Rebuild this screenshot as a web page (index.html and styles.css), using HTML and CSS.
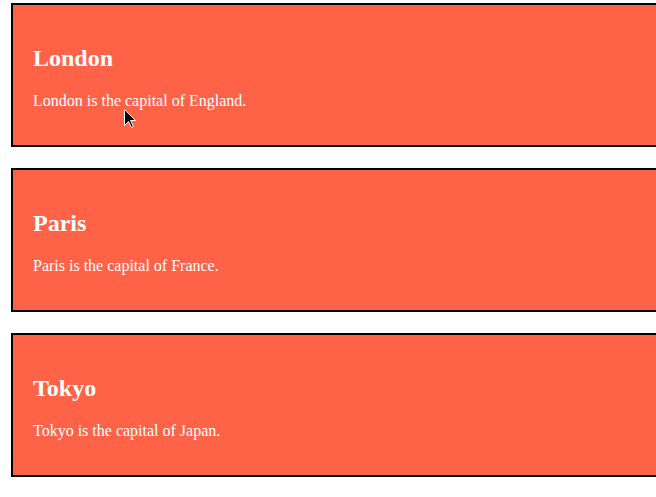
FILE: index.html
```html
<!DOCTYPE html>
<html>
<head>
<meta charset="utf-8">
<link rel="stylesheet" href="styles.css">
</head>
<body>
<div class="page">
  <div class="city">
    <h2>London</h2>
    <p>London is the capital of England.</p>
  </div>
  <div class="city">
    <h2>Paris</h2>
    <p>Paris is the capital of France.</p>
  </div>
  <div class="city">
    <h2>Tokyo</h2>
    <p>Tokyo is the capital of Japan.</p>
  </div>
</div>
<svg class="cursor" width="13" height="20" viewBox="0 0 13 20">
  <path d="M0.5 0.5 L0.5 16.5 L4.5 12.5 L7.5 18.5 L9.5 17.5 L6.5 11.5 L11.5 11.5 Z" fill="#000" stroke="#fff" stroke-width="1"/>
</svg>
</body>
</html>
```
FILE: styles.css
```css
html, body {
  margin: 0;
  padding: 0;
  background: #fff;
  overflow: hidden;
}
body {
  font-family: "Liberation Serif", "Times New Roman", serif;
  width: 656px;
  height: 497px;
  position: relative;
}
.page {
  display: flex;
  flex-direction: column;
  gap: 21px;
  padding: 3px 0 0 11px;
  overflow: hidden;
}
.city {
  box-sizing: border-box;
  width: 660px;
  height: 144px;
  border: 2px solid #000;
  background: #ff6347;
  color: #fff;
  padding: 20px 20px 16px;
  flex-shrink: 0;
}
.city h2 {
  font-size: 24px;
  font-weight: bold;
  margin: 20px 0;
  line-height: 27px;
}
.city p {
  font-size: 16px;
  margin: 20px 0;
  line-height: 18px;
}
.cursor {
  position: absolute;
  left: 124px;
  top: 109px;
}
```
